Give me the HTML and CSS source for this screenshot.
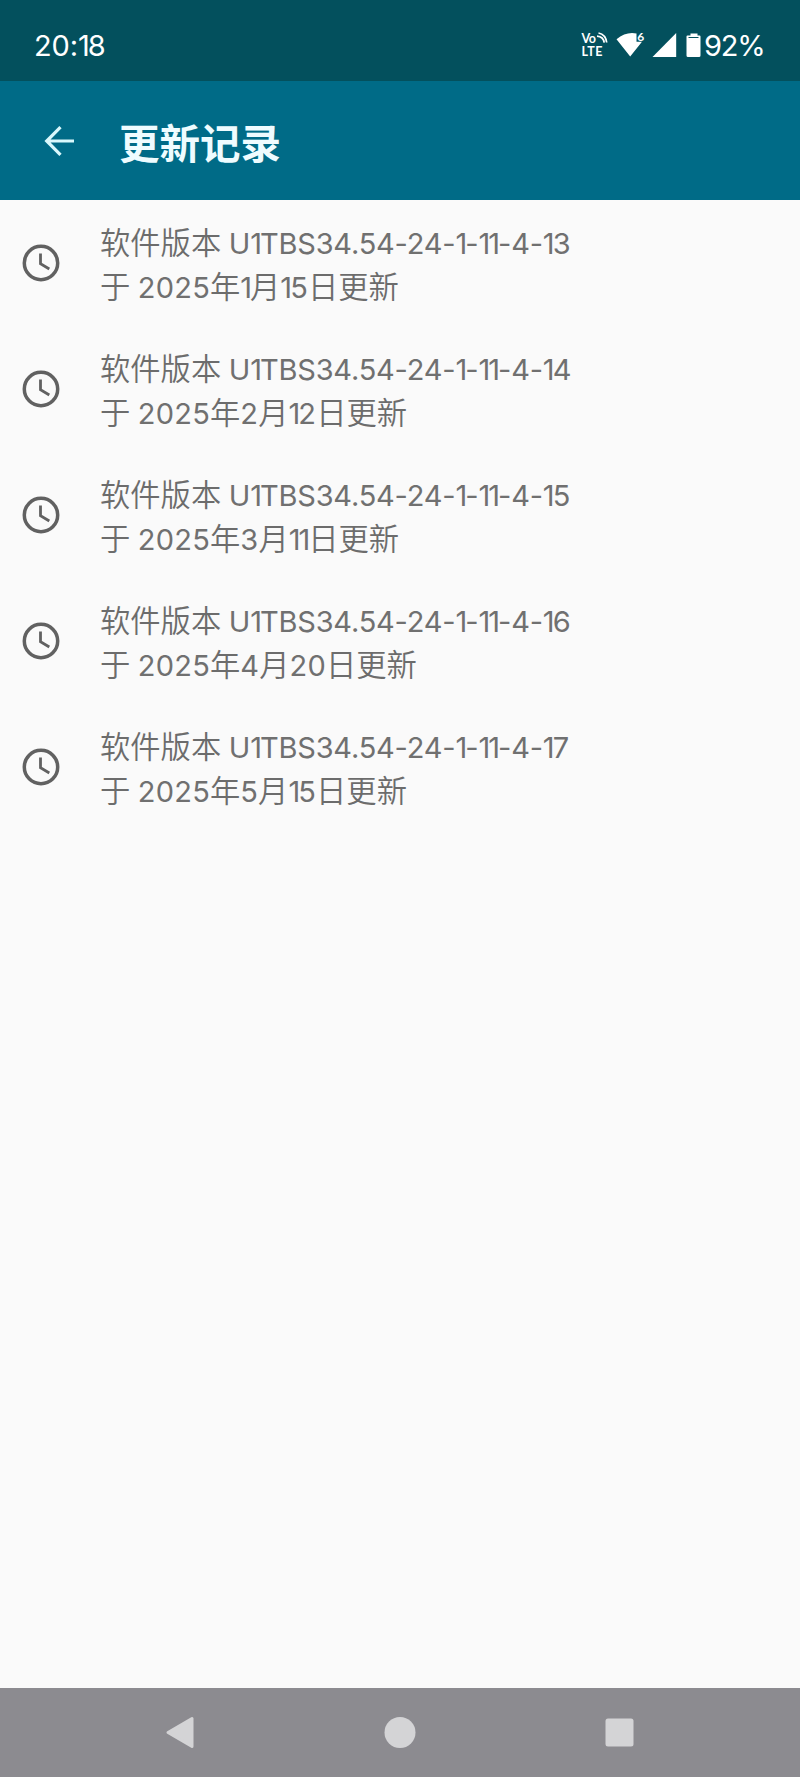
FILE: index.html
```html
<!DOCTYPE html>
<html lang="zh-CN">
<head>
<meta charset="utf-8">
<title>更新记录</title>
<link rel="stylesheet" href="styles.css">
</head>
<body>
<div class="screen">
  <div class="status">
    <span class="time">20:<i>1</i>8</span>
    <svg class="status-icons" width="124" height="30" viewBox="-1.5 0 124 30" fill="#fff">
      <text class="tiny" x="0" y="12" textLength="14.500">Vo</text>
      <text class="tiny" x="0" y="25.2" textLength="21">LTE</text>
      <path d="M15.500 5.200q6.500.5 7.200 6.500M17 2q7.300 1.500 8.200 9.500" fill="none" stroke="#fff" stroke-width="1.700"/>
      <path d="M35 8.200Q42.500 2 50.500 2q2.300 0 4.500.6V10.800h5.500L48.700 25.400z"/>
      <text class="six" x="55.800" y="9.500">6</text>
      <path d="M94.700 2v24H71z"/>
      <path d="M106 4.500h3V2.600h7v1.900h2q1 0 1 1V24.500q0 1.500-1.500 1.500H106.500q-1.500 0-1.500-1.500V5.500q0-1 1-1z"/>
      <path d="M107 6.500h10" stroke="#03505d"/>
    </svg>
    <span class="battery">92%</span>
  </div>
  <header class="bar">
    <svg class="back" width="32" height="32" viewBox="0 0 32 32" fill="none" stroke="#d9f8fc" stroke-width="3.200"><path d="M31 16H4M17.500 2.200L3.700 16l13.800 13.800"/></svg>
    <h1>更新记录</h1>
  </header>
  <main class="list">
    <div class="row">
      <svg class="clock" viewBox="0 0 38 38"><circle cx="19" cy="19" r="16.700"/><path d="M18.500 9.500v10.300l8.800 5.200"/></svg>
      <div><p>软件版本 <b class="ver">U<i>1</i>TBS34.54-24-<i>1</i>-<i>1</i><i>1</i>-4-<i>1</i>3</b></p><p>于 <b>2025</b>年<b><i>1</i></b>月<b><i>1</i>5</b>日更新</p></div>
    </div>
    <div class="row">
      <svg class="clock" viewBox="0 0 38 38"><circle cx="19" cy="19" r="16.700"/><path d="M18.500 9.500v10.300l8.800 5.200"/></svg>
      <div><p>软件版本 <b class="ver">U<i>1</i>TBS34.54-24-<i>1</i>-<i>1</i><i>1</i>-4-<i>1</i>4</b></p><p>于 <b>2025</b>年<b>2</b>月<b><i>1</i>2</b>日更新</p></div>
    </div>
    <div class="row">
      <svg class="clock" viewBox="0 0 38 38"><circle cx="19" cy="19" r="16.700"/><path d="M18.500 9.500v10.300l8.800 5.200"/></svg>
      <div><p>软件版本 <b class="ver">U<i>1</i>TBS34.54-24-<i>1</i>-<i>1</i><i>1</i>-4-<i>1</i>5</b></p><p>于 <b>2025</b>年<b>3</b>月<b><i>1</i><i>1</i></b>日更新</p></div>
    </div>
    <div class="row">
      <svg class="clock" viewBox="0 0 38 38"><circle cx="19" cy="19" r="16.700"/><path d="M18.500 9.500v10.300l8.800 5.200"/></svg>
      <div><p>软件版本 <b class="ver">U<i>1</i>TBS34.54-24-<i>1</i>-<i>1</i><i>1</i>-4-<i>1</i>6</b></p><p>于 <b>2025</b>年<b>4</b>月<b>20</b>日更新</p></div>
    </div>
    <div class="row">
      <svg class="clock" viewBox="0 0 38 38"><circle cx="19" cy="19" r="16.700"/><path d="M18.500 9.500v10.300l8.800 5.200"/></svg>
      <div><p>软件版本 <b class="ver">U<i>1</i>TBS34.54-24-<i>1</i>-<i>1</i><i>1</i>-4-<i>1</i>7</b></p><p>于 <b>2025</b>年<b>5</b>月<b><i>1</i>5</b>日更新</p></div>
    </div>
  </main>
  <nav class="nav">
    <svg width="32" height="34" viewBox="0 0 32 34"><path d="M3 16.500L27 2.500v28z" stroke="#d4d4d6" stroke-width="3" stroke-linejoin="round"/></svg>
    <svg width="32" height="34" viewBox="0 0 32 34"><circle cx="16" cy="16.500" r="15.500"/></svg>
    <svg width="32" height="34" viewBox="0 0 32 34"><rect x="1.500" y="2.500" width="28" height="28" rx="2.500"/></svg>
  </nav>
</div>
</body>
</html>
```
FILE: styles.css
```css
* { box-sizing: border-box; }
body { margin: 0; }
i { font-style: normal; letter-spacing: -2px; }
.screen {
  display: flex;
  flex-direction: column;
  width: 800px;
  height: 1777px;
  background: #fafafa;
  font-family: Inter, "Noto Sans CJK SC", sans-serif;
}
.status {
  display: flex;
  align-items: center;
  height: 81px;
  padding: 10px 34px 0 34px;
  background: #03505d;
  color: #fff;
  font-size: 29px;
}
.time { flex: 1; letter-spacing: -0.1px; }
.status-icons { flex: none; overflow: visible; }
.battery { width: 62px; font-size: 29px; font-weight: 400; letter-spacing: -1.2px; white-space: nowrap; }
.tiny { font: 700 12.5px Lato, sans-serif; }
.six { font: 700 12px Lato, sans-serif; }
.bar {
  display: flex;
  align-items: center;
  height: 119px;
  padding: 0 43px;
  background: #006b87;
}
.back { margin-right: 44px; }
h1 {
  margin: 2px 0 0;
  color: #effcff;
  font: 700 40.500px/56px "Noto Sans CJK SC", sans-serif;
}
.list { flex: 1; padding-top: 21px; }
.row {
  display: flex;
  height: 126px;
  padding-left: 21.500px;
}
.row > div { margin-top: -2px; }
.clock {
  width: 38px;
  height: 38px;
  margin: 23px 40.500px 0 0;
  fill: none;
  stroke: #616161;
  stroke-width: 3.500;
}
.clock path { stroke-width: 2.800; }
p {
  margin: 0;
  color: #6c6c6c;
  font: 350 30.300px/44.300px "Noto Sans CJK SC", sans-serif;
  word-spacing: 0.8px;
  white-space: nowrap;
}
b { color: #707070; font: 400 29px/1 Inter, sans-serif; letter-spacing: 0.2px; }
.ver { letter-spacing: -0.2px; }
.nav {
  display: flex;
  align-items: center;
  justify-content: space-between;
  height: 89px;
  padding: 0 164.500px;
  background: #8c8b90;
  fill: #d4d4d6;
}
```
